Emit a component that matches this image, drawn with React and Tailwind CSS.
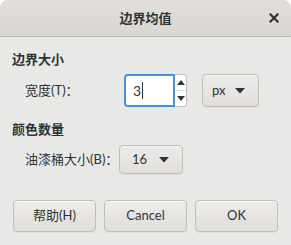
import React from "react";

const font = { fontFamily: 'Lato, "Noto Sans CJK SC", sans-serif' };

function Caret() {
  return (
    <svg width="10" height="6" viewBox="0 0 10 6" className="block">
      <path d="M0 0 L10 0 L5 5.5 Z" fill="#2e3436" />
    </svg>
  );
}

function Btn({ children, className = "" }) {
  return (
    <div
      className={
        "flex items-center rounded-[4px] border border-[#c2bdb7] bg-gradient-to-b from-[#eeecea] to-[#e0ddda] shadow-[inset_0_1px_0_#f8f7f6,0_1px_0_rgba(0,0,0,0.05)] text-[#2e3436] " +
        className
      }
    >
      {children}
    </div>
  );
}

export default function App() {
  return (
    <div className="w-[291px] h-[245px] bg-white" style={font}>
      <div className="w-[291px] h-[245px] rounded-t-[8px] overflow-hidden bg-[#e8e8e7] flex flex-col">
        <div className="h-[37px] shrink-0 border-b border-[#bfb8b1] bg-gradient-to-b from-[#e1dedb] to-[#dad6d2] flex items-center relative">
          <div className="w-full text-center text-[13px] font-bold text-[#2e3436] leading-none">边界均值</div>
          <div className="absolute right-[12px] top-[13px]">
            <svg width="10" height="10" viewBox="0 0 10 10">
              <path d="M1.5 1.5 L8.5 8.5 M8.5 1.5 L1.5 8.5" stroke="#2e3436" strokeWidth="2.2" strokeLinecap="square" />
            </svg>
          </div>
        </div>

        <div className="flex flex-col text-[13px] text-[#2e3436]">
          <div className="mt-[13px] h-[20px] flex items-center pl-[12px] font-bold">边界大小</div>

          <div className="mt-[4px] h-[33px] flex items-center">
            <div className="pl-[25px] w-[124px]">宽度(T)：</div>
            <div className="flex h-[33px] w-[63px]">
              <div className="flex-1 rounded-l-[4px] border-2 border-[#4a90d9] bg-white flex items-center pl-[7px]">
                <span className="text-[14px] leading-none">3</span>
                <span className="ml-[1px] w-[1px] h-[17px] bg-[#2e3436]" />
              </div>
              <div className="w-[12px] flex flex-col rounded-r-[4px] border border-l-0 border-[#c2bdb7] bg-white">
                <div className="flex-1 flex items-center justify-center border-b border-[#dcd9d6]">
                  <svg width="8" height="5" viewBox="0 0 8 5"><path d="M0 5 L8 5 L4 0 Z" fill="#2e3436" /></svg>
                </div>
                <div className="flex-1 flex items-center justify-center">
                  <svg width="8" height="5" viewBox="0 0 8 5"><path d="M0 0 L8 0 L4 5 Z" fill="#2e3436" /></svg>
                </div>
              </div>
            </div>
            <Btn className="ml-[15px] w-[57px] h-[33px] pl-[9px] pr-[13px] justify-between">
              <span>px</span>
              <Caret />
            </Btn>
          </div>

          <div className="mt-[13px] h-[20px] flex items-center pl-[12px] font-bold">颜色数量</div>

          <div className="mt-[5px] h-[29px] flex items-center">
            <div className="pl-[25px] w-[119px]">油漆桶大小(B)：</div>
            <Btn className="w-[64px] h-[29px] pl-[12px] pr-[13px] justify-between">
              <span>16</span>
              <Caret />
            </Btn>
          </div>

          <div className="mt-[26px] h-[32px] flex px-[13px] gap-[8px]">
            <Btn className="w-[83px] h-[32px] justify-center">帮助(H)</Btn>
            <Btn className="w-[83px] h-[32px] justify-center">Cancel</Btn>
            <Btn className="w-[83px] h-[32px] justify-center">OK</Btn>
          </div>
        </div>
      </div>
    </div>
  );
}
